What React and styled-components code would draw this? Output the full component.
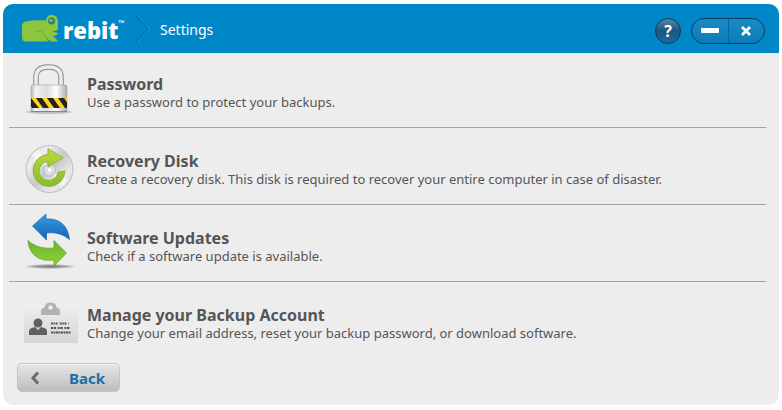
import styled, { createGlobalStyle } from "styled-components";

const settings = [
  {
    icon: LockIcon,
    title: "Password",
    text: "Use a password to protect your backups.",
  },
  {
    icon: DiskIcon,
    title: "Recovery Disk",
    text: "Create a recovery disk. This disk is required to recover your entire computer in case of disaster.",
  },
  {
    icon: UpdateIcon,
    title: "Software Updates",
    text: "Check if a software update is available.",
  },
  {
    icon: AccountIcon,
    title: "Manage your Backup Account",
    text: "Change your email address, reset your backup password, or download software.",
  },
];

function App() {
  return (
    <>
      <GlobalStyle />
      <Window>
        {/* title bar */}
        <TitleBar>
          <Brand>
            <FrogLogo />
            <span>rebit</span>
            <sup>™</sup>
          </Brand>
          <Separator viewBox="0 0 16 28" aria-hidden="true">
            <path d="M2 1 L14 14 L2 27" fill="none" stroke="#2c9ad3" />
            <path d="M1 1 L13 14 L1 27" fill="none" stroke="#075b8c" />
          </Separator>
          <h1>Settings</h1>
          <Controls>
            <HelpButton aria-label="Help">?</HelpButton>
            <WindowButtons>
              <button aria-label="Minimize">
                <svg width="18" height="6" viewBox="0 0 18 6">
                  <rect width="18" height="5" rx="1" fill="#fff" />
                </svg>
              </button>
              <button aria-label="Close">
                <svg width="10" height="10" viewBox="0 0 10 10">
                  <path
                    d="M1 1 L9 9 M9 1 L1 9"
                    stroke="#fff"
                    strokeWidth="2.6"
                  />
                </svg>
              </button>
            </WindowButtons>
          </Controls>
        </TitleBar>

        {/* settings */}
        <List>
          {settings.map(({ icon: Icon, title, text }) => (
            <Item key={title}>
              <ItemButton>
                <Icon />
                <ItemText>
                  <strong>{title}</strong>
                  <span>{text}</span>
                </ItemText>
              </ItemButton>
            </Item>
          ))}
        </List>

        {/* footer */}
        <Footer>
          <BackButton>
            <svg width="10" height="14" viewBox="0 0 10 14" aria-hidden="true">
              <path
                d="M8 1.5 L3 7 L8 12.5"
                fill="none"
                stroke="#6b6b6b"
                strokeWidth="3"
              />
            </svg>
            <span>Back</span>
          </BackButton>
        </Footer>
      </Window>
    </>
  );
}

function FrogLogo() {
  return (
    <svg width="38" height="30" viewBox="0 0 38 30" aria-hidden="true">
      <path
        d="M1 12 Q1 8 5 7.500 Q14 5.500 25 6.500 Q25.500 1 30.500 1 Q36.500 1 37 7 V14 Q37 16.500 34 17 L31 17.500 L37 19 Q36 22 32 22 Q35 24 37 27.500 H30 Q27 26 24.500 23 L27 27.500 H5 Q1 27.500 1 23 Z"
        fill="#8cc63f"
      />
      <circle cx="30.500" cy="7" r="3.400" fill="#2b7f7a" />
      <circle cx="30" cy="6.500" r="1.600" fill="#8cc63f" />
      <path
        d="M15 17.500 Q20 16 22 19 T27 27.500"
        fill="none"
        stroke="#5fae4c"
      />
    </svg>
  );
}

function LockIcon() {
  return (
    <svg width="60" height="60" viewBox="0 0 60 60" aria-hidden="true">
      <defs>
        <linearGradient id="lockBody">
          <stop offset="0" stopColor="#b5b5b5" />
          <stop offset=".12" stopColor="#f2f2f2" />
          <stop offset=".45" stopColor="#dcdcdc" />
          <stop offset=".7" stopColor="#fff" />
          <stop offset="1" stopColor="#ababab" />
        </linearGradient>
        <clipPath id="lockBand">
          <rect x="10" y="39" width="36" height="10" />
        </clipPath>
      </defs>
      <ellipse cx="28" cy="53" rx="23" ry="2" fill="#aaa" opacity=".6" />
      <path
        d="M15 27 V18 Q15 8 27.500 8 Q40 8 40 18 V27"
        fill="none"
        stroke="#8a8a8a"
        strokeWidth="5.500"
      />
      <path
        d="M15 27 V18 Q15 8 27.500 8 Q40 8 40 18 V27"
        fill="none"
        stroke="#ececec"
        strokeWidth="3.500"
      />
      <rect
        x="10"
        y="26"
        width="36"
        height="27"
        rx="2"
        fill="url(#lockBody)"
        stroke="#aaa"
        strokeWidth=".7"
      />
      <rect x="10" y="39" width="36" height="10" fill="#ffd11a" />
      <g clipPath="url(#lockBand)" fill="#24231d">
        <path d="M4 39 H10 L18 49 H11Z M15 39 H21 L28 49 H22Z M26 39 H32 L39 49 H33Z M37 39 H43 L50 49 H44Z" />
      </g>
      <path d="M10 52.500 H46" stroke="#858585" />
    </svg>
  );
}

function DiskIcon() {
  return (
    <svg width="60" height="60" viewBox="0 0 60 60" aria-hidden="true">
      <defs>
        <linearGradient id="disk" x1="0" y1="0" x2="1" y2="1">
          <stop offset="0" stopColor="#c9c9c9" />
          <stop offset=".25" stopColor="#ededed" />
          <stop offset=".5" stopColor="#c5c9c5" />
          <stop offset=".75" stopColor="#ebebeb" />
          <stop offset="1" stopColor="#c2c2c2" />
        </linearGradient>
        <linearGradient id="diskArrow" x1="0" y1="0" x2="0" y2="1">
          <stop offset="0" stopColor="#b9db3c" />
          <stop offset="1" stopColor="#8cbb28" />
        </linearGradient>
      </defs>
      <circle cx="28.500" cy="33" r="23.500" fill="url(#disk)" stroke="#bdbdbd" />
      <path d="M28 33 L10 20 A22 22 0 0 1 18 13Z" fill="#fff" opacity=".5" />
      <path d="M28 33 L47 44 A22 22 0 0 1 40 52Z" fill="#fff" opacity=".5" />
      <circle cx="28.500" cy="34" r="6" fill="#ddd" stroke="#bbb" />
      <circle cx="28.500" cy="34" r="2" fill="#fff" />
      <path
        d="M27 12.500 L42 22 L27 31 V25.500 A9.500 9.500 0 1 0 37 36 L44 35 A16 16 0 1 1 27 18.500Z"
        fill="url(#diskArrow)"
        stroke="#86ab3c"
        strokeWidth=".8"
      />
    </svg>
  );
}

function UpdateIcon() {
  return (
    <svg width="60" height="60" viewBox="0 0 60 60" aria-hidden="true">
      <defs>
        <linearGradient id="blueArrow" x1="0" y1="0" x2="0" y2="1">
          <stop offset="0" stopColor="#3a9ae4" />
          <stop offset="1" stopColor="#1265b5" />
        </linearGradient>
        <linearGradient id="greenArrow" x1="0" y1="0" x2="0" y2="1">
          <stop offset="0" stopColor="#6cb52a" />
          <stop offset="1" stopColor="#8ed33a" />
        </linearGradient>
        <radialGradient id="updateShadow">
          <stop offset="0" stopColor="#777" />
          <stop offset=".6" stopColor="#888" stopOpacity=".7" />
          <stop offset="1" stopColor="#777" stopOpacity="0" />
        </radialGradient>
      </defs>
      <ellipse cx="29" cy="53.500" rx="26" ry="2.500" fill="url(#updateShadow)" />
      <path
        d="M11.500 13 L25 1 V6 C38 5 47 12 48.500 26.500 C42 21 35 19 25.500 20 V27Z"
        fill="url(#blueArrow)"
        stroke="#1762a6"
        strokeWidth=".7"
      />
      <path
        d="M7 27.500 C14 34 23 36 33 35 V27.500 L45.500 40 L33 53 V47 C20 49 8 43 7 27.500Z"
        fill="url(#greenArrow)"
        stroke="#629e28"
        strokeWidth=".7"
      />
    </svg>
  );
}

function AccountIcon() {
  return (
    <svg width="60" height="60" viewBox="0 0 60 60" aria-hidden="true">
      <defs>
        <linearGradient id="card" x1="0" y1="0" x2="0" y2="1">
          <stop offset="0" stopColor="#ebebeb" />
          <stop offset="1" stopColor="#d6d6d6" />
        </linearGradient>
      </defs>
      <rect x="3" y="19" width="54" height="34" fill="url(#card)" />
      <path
        d="M20 25 V21 Q20 18 23.500 17.500 Q24 12.500 29.500 12.500 Q35 12.500 35.500 17.500 Q39 18 39 21 V25Z"
        fill="#b2b2b2"
      />
      <circle cx="29.500" cy="17.500" r="2.300" fill="#ececec" />
      <circle cx="17" cy="33" r="4.500" fill="#606060" />
      <path d="M8 45 V41 Q8 38 14 37 L17 40 L20 37 Q26 38 26 41 V45Z" fill="#606060" />
      <g fill="none" stroke="#555" strokeWidth="1.800">
        <path d="M30 33.500 H48" strokeDasharray="2 .6 1.500 .6 2 2" />
        <path d="M30 38 H50" strokeDasharray="2 .6 2.500 1.600" />
        <path d="M30 42.500 H50" strokeDasharray="2.500 .5 1.500 .5" />
      </g>
    </svg>
  );
}

const GlobalStyle = createGlobalStyle`
  * {
    box-sizing: border-box;
  }

  body {
    margin: 0;
    background: #fff;
    font-family: "Noto Sans", "Open Sans", sans-serif;
    color: #555;
  }

  button {
    font: inherit;
    color: inherit;
    padding: 0;
    border: 0;
    background: none;
    cursor: pointer;
  }
`;

const Window = styled.main`
  margin: 4px 3px;
  border-radius: 10px;
  background: #ededed;
  overflow: hidden;
`;

const TitleBar = styled.header`
  display: flex;
  align-items: center;
  height: 49px;
  padding: 0 14px 0 18px;
  background: #0087c8;
  color: #fff;

  h1 {
    margin: 2px 0 0 9px;
    font-size: 14px;
    line-height: 20px;
    font-weight: 400;
  }
`;

const Brand = styled.div`
  display: flex;
  align-items: center;
  width: 114px;

  span {
    margin-left: 4px;
    padding-top: 2px;
    font-family: "Open Sans", sans-serif;
    font-size: 22px;
    line-height: 30px;
    font-weight: 800;
  }

  sup {
    align-self: flex-start;
    font-size: 8px;
    line-height: 20px;
  }
`;

const Separator = styled.svg`
  width: 16px;
  height: 28px;
`;

const Controls = styled.div`
  display: flex;
  align-items: center;
  gap: 10px;
  margin-left: auto;
  padding-top: 4px;
`;

const HelpButton = styled.button`
  width: 26px;
  height: 26px;
  border: 1px solid #073c60;
  border-radius: 50%;
  background: linear-gradient(#5586a6, #1c557f 50%, #1d6c9c);
  font-size: 16px;
  line-height: 24px;
  font-weight: 700;
`;

const WindowButtons = styled.div`
  display: flex;
  width: 74px;
  height: 26px;
  border: 1px solid #063d63;
  border-radius: 13px;
  background: linear-gradient(#1a8ac4, #0a7cba);

  button {
    display: flex;
    flex: 1;
    align-items: center;
    justify-content: center;
  }

  button + button {
    border-left: 1px solid #0567a0;
  }
`;

const List = styled.ul`
  margin: 0;
  padding: 0 13px 0 6px;
  list-style: none;
`;

const Item = styled.li`
  padding-top: 8px;

  &:first-child {
    padding-top: 6px;
  }

  & + & {
    border-top: 1px solid #a3a3a3;
  }
`;

const ItemButton = styled.button`
  display: flex;
  align-items: center;
  gap: 6px;
  width: 100%;
  padding: 0 0 8px 12px;
  text-align: left;

  svg {
    flex-shrink: 0;
  }
`;

const ItemText = styled.span`
  display: flex;
  flex-direction: column;
  padding-top: 8px;
  font-size: 13px;
  line-height: 18px;

  strong {
    font-size: 16px;
  }
`;

const Footer = styled.footer`
  padding: 5px 14px 13px;
`;

const BackButton = styled.button`
  display: flex;
  align-items: center;
  width: 103px;
  height: 29px;
  padding: 0 14px 0 12px;
  border: 1px solid #c4c4c4;
  border-radius: 5px;
  background: linear-gradient(#e6e6e6, #bebebe);
  box-shadow: inset 0 1px #f6f6f6;
  color: #1b6ea5;
  font-size: 15px;
  font-weight: 700;

  span {
    margin-left: auto;
  }
`;

export default App;
